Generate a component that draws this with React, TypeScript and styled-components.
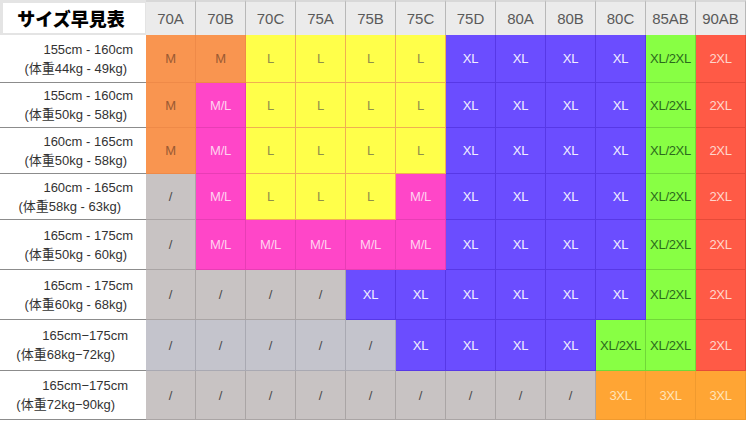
import React from "react";
import styled, { createGlobalStyle } from "styled-components";

const GlobalStyle = createGlobalStyle`
  html, body {
    margin: 0;
    padding: 0;
    background: #ffffff;
  }
  body {
    width: 752px;
    height: 424px;
    overflow: hidden;
  }
`;

type Tone = "orange" | "yellow" | "pink" | "blue" | "green" | "red" | "gold" | "gray" | "slate";

const tones: Record<Tone, { bg: string; line: string; fg: string }> = {
  orange: { bg: "#f99550", line: "#ef8a48", fg: "#9a5a33" },
  yellow: { bg: "#ffff4a", line: "#f0b050", fg: "#8f8f4a" },
  pink: { bg: "#ff46c8", line: "#e83db5", fg: "#ffd2ef" },
  blue: { bg: "#6b4dff", line: "#5738e6", fg: "#f2efff" },
  green: { bg: "#88ff44", line: "#70d838", fg: "#2c6a1c" },
  red: { bg: "#ff5a46", line: "#e64a38", fg: "#ffd6cc" },
  gold: { bg: "#ffa534", line: "#f09a2e", fg: "#ffe4b8" },
  gray: { bg: "#c8c3c3", line: "#aaa5a5", fg: "#4a4a4a" },
  slate: { bg: "#c4c4cc", line: "#a9a9b2", fg: "#4a4a4a" },
};

const rowHeights = [48, 45, 46, 46, 50, 50, 51, 49];

const sizes = ["70A", "70B", "70C", "75A", "75B", "75C", "75D", "80A", "80B", "80C", "85AB", "90AB"];

type Cell = [string, Tone];
const c = (text: string, tone: Tone, n = 1): Cell[] => Array.from({ length: n }, () => [text, tone]);

// per-row label indents copied from the picture (right padding of each line)
const rows: { height: string; weight: string; pad: [number, number]; cells: Cell[] }[] = [
  {
    height: "155cm - 160cm",
    weight: "(体重44kg - 49kg)",
    pad: [13, 19],
    cells: [...c("M", "orange", 2), ...c("L", "yellow", 4), ...c("XL", "blue", 4), ...c("XL/2XL", "green"), ...c("2XL", "red")],
  },
  {
    height: "155cm - 160cm",
    weight: "(体重50kg - 58kg)",
    pad: [13, 19],
    cells: [...c("M", "orange"), ...c("M/L", "pink"), ...c("L", "yellow", 4), ...c("XL", "blue", 4), ...c("XL/2XL", "green"), ...c("2XL", "red")],
  },
  {
    height: "160cm - 165cm",
    weight: "(体重50kg - 58kg)",
    pad: [13, 19],
    cells: [...c("M", "orange"), ...c("M/L", "pink"), ...c("L", "yellow", 4), ...c("XL", "blue", 4), ...c("XL/2XL", "green"), ...c("2XL", "red")],
  },
  {
    height: "160cm - 165cm",
    weight: "(体重58kg - 63kg)",
    pad: [13, 25],
    cells: [...c("/", "gray"), ...c("M/L", "pink"), ...c("L", "yellow", 3), ...c("M/L", "pink"), ...c("XL", "blue", 4), ...c("XL/2XL", "green"), ...c("2XL", "red")],
  },
  {
    height: "165cm - 175cm",
    weight: "(体重50kg - 60kg)",
    pad: [13, 19],
    cells: [...c("/", "gray"), ...c("M/L", "pink", 5), ...c("XL", "blue", 4), ...c("XL/2XL", "green"), ...c("2XL", "red")],
  },
  {
    height: "165cm - 175cm",
    weight: "(体重60kg - 68kg)",
    pad: [13, 19],
    cells: [...c("/", "gray", 4), ...c("XL", "blue", 6), ...c("XL/2XL", "green"), ...c("2XL", "red")],
  },
  {
    height: "165cm−175cm",
    weight: "(体重68kg−72kg)",
    pad: [18, 31],
    cells: [...c("/", "slate", 5), ...c("XL", "blue", 4), ...c("XL/2XL", "green", 2), ...c("2XL", "red")],
  },
  {
    height: "165cm−175cm",
    weight: "(体重72kg−90kg)",
    pad: [18, 31],
    cells: [...c("/", "gray", 9), ...c("3XL", "gold", 3)],
  },
];

const Table = styled.div`
  display: grid;
  grid-template-columns: 146px repeat(12, 50px);
  grid-template-rows: 35px ${rowHeights.map((h) => `${h}px`).join(" ")};
  width: 746px;
`;

const TitleCell = styled.div`
  box-sizing: border-box;
  background: #ffffff;
  border: 3px solid #e4e4e4;
  border-bottom-width: 2px;
  border-right-width: 1px;
  display: flex;
  align-items: center;
  justify-content: center;
  padding-right: 6px;
  font-family: "Noto Sans CJK JP", sans-serif;
  font-weight: 900;
  font-size: 18px;
  color: #000000;
`;

const HeadCell = styled.div`
  box-sizing: border-box;
  background: #ebebeb;
  border-top: 2px solid #d8d8d8;
  border-right: 1px solid #b8b8b8;
  display: flex;
  align-items: center;
  justify-content: center;
  font-family: "Liberation Sans", Arial, sans-serif;
  font-size: 15px;
  color: #5a5a5a;
`;

const LabelCell = styled.div`
  box-sizing: border-box;
  background: #ffffff;
  border-bottom: 1px solid #8c8c8c;
  display: flex;
  flex-direction: column;
  justify-content: center;
  align-items: flex-end;
  font-family: "Liberation Sans", "Noto Sans CJK SC", sans-serif;
  font-size: 13px;
  line-height: 19px;
  color: #333333;
`;

const LabelLine = styled.span<{ $pad: number }>`
  padding-right: ${(p) => p.$pad}px;
`;

const SizeCell = styled.div<{ $tone: Tone }>`
  box-sizing: border-box;
  background: ${(p) => tones[p.$tone].bg};
  border-right: 1px solid ${(p) => tones[p.$tone].line};
  border-bottom: 1px solid ${(p) => tones[p.$tone].line};
  color: ${(p) => tones[p.$tone].fg};
  display: flex;
  align-items: center;
  justify-content: center;
  font-family: "Liberation Sans", Arial, sans-serif;
  font-size: 13px;
  letter-spacing: -0.3px;
`;

export default function App() {
  return (
    <>
      <GlobalStyle />
      <Table>
        <TitleCell>サイズ早見表</TitleCell>
        {sizes.map((s) => (
          <HeadCell key={s}>{s}</HeadCell>
        ))}
        {rows.map((row, i) => (
          <React.Fragment key={i}>
            <LabelCell>
              <LabelLine $pad={row.pad[0]}>{row.height}</LabelLine>
              <LabelLine $pad={row.pad[1]}>{row.weight}</LabelLine>
            </LabelCell>
            {row.cells.map(([text, tone], j) => (
              <SizeCell key={j} $tone={tone}>
                {text}
              </SizeCell>
            ))}
          </React.Fragment>
        ))}
      </Table>
    </>
  );
}
